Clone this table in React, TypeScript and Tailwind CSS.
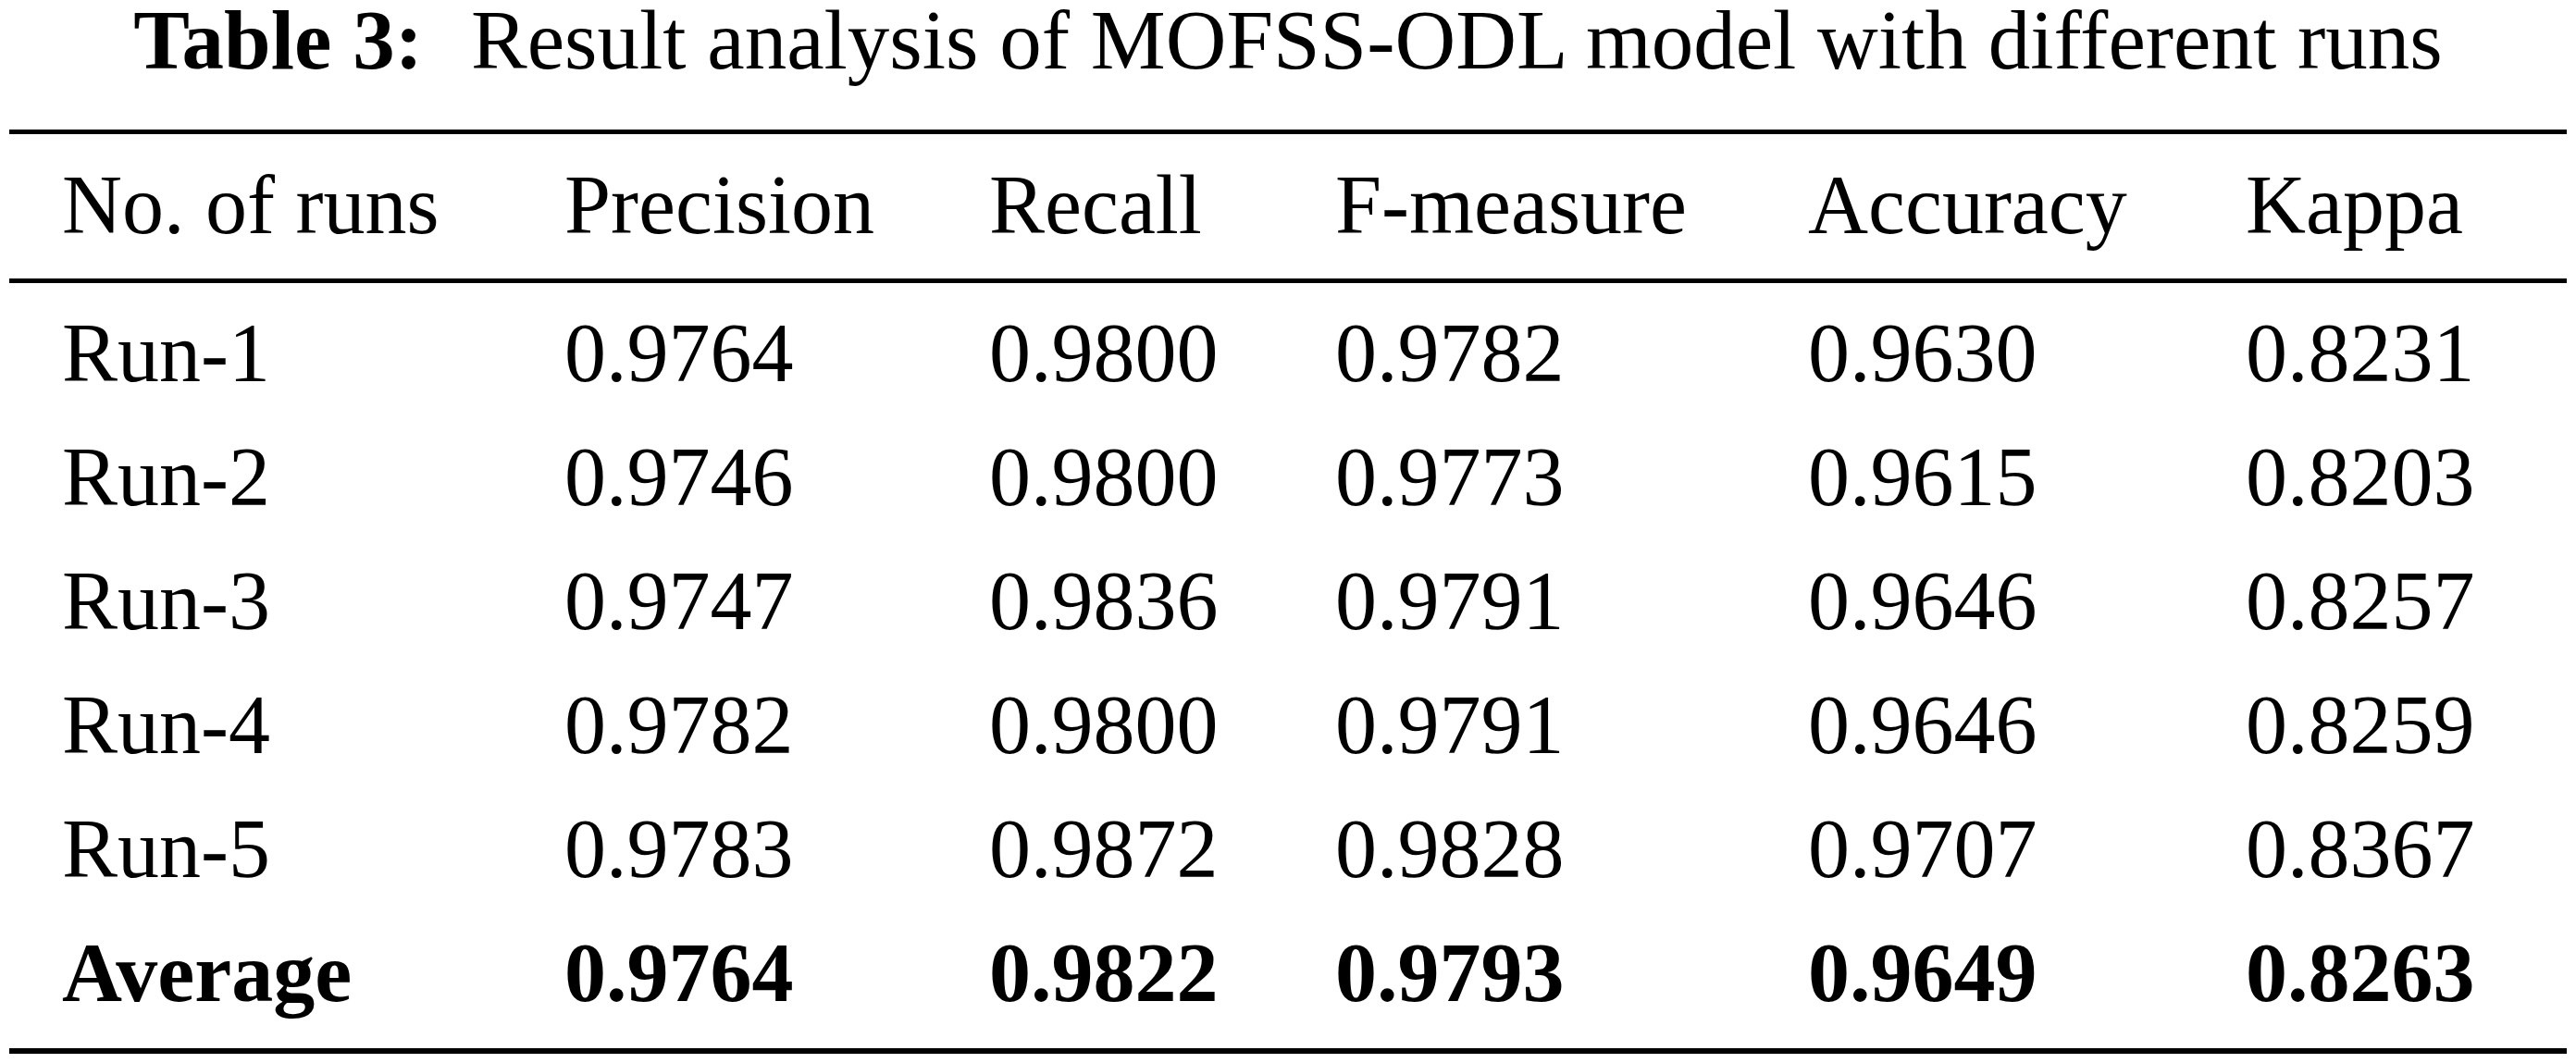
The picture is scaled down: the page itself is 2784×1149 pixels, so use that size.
import React from 'react'

const headers = ['No. of runs', 'Precision', 'Recall', 'F-measure', 'Accuracy', 'Kappa']

const rows = [
  ['Run-1', '0.9764', '0.9800', '0.9782', '0.9630', '0.8231'],
  ['Run-2', '0.9746', '0.9800', '0.9773', '0.9615', '0.8203'],
  ['Run-3', '0.9747', '0.9836', '0.9791', '0.9646', '0.8257'],
  ['Run-4', '0.9782', '0.9800', '0.9791', '0.9646', '0.8259'],
  ['Run-5', '0.9783', '0.9872', '0.9828', '0.9707', '0.8367'],
]

const average = ['Average', '0.9764', '0.9822', '0.9793', '0.9649', '0.8263']

function Row({ cells, bold = false }: { cells: string[]; bold?: boolean }) {
  return (
    <div
      className={`grid grid-cols-[543px_459px_374px_511px_473px_1fr] pl-[57px] h-[134px] leading-[134px] whitespace-nowrap ${
        bold ? 'font-bold' : ''
      }`}
    >
      {cells.map((c, i) => (
        <div key={i}>{c}</div>
      ))}
    </div>
  )
}

function App() {
  return (
    <div className="w-[2784px] h-[1149px] bg-white text-black font-['Liberation_Serif',serif] text-[90px]">
      {/* Caption */}
      <div className="w-[2784px] pt-[4px] h-[84px] leading-[80px] text-[91px] text-center whitespace-nowrap">
        <span className="font-bold">Table 3:</span>
        <span className="ml-[52px]">Result analysis of MOFSS-ODL model with different runs</span>
      </div>

      {/* Table */}
      <div className="ml-[10px] w-[2764px] mt-[56px]">
        <div className="h-[5px] bg-black" />
        <div className="mt-[10px]">
          <Row cells={headers} />
        </div>
        <div className="mt-[12px] h-[5px] bg-black" />
        <div className="mt-[9px]">
          {rows.map((r) => (
            <Row key={r[0]} cells={r} />
          ))}
          <Row cells={average} bold />
        </div>
        <div className="mt-[14px] h-[6px] bg-black" />
      </div>
    </div>
  )
}

export default App
